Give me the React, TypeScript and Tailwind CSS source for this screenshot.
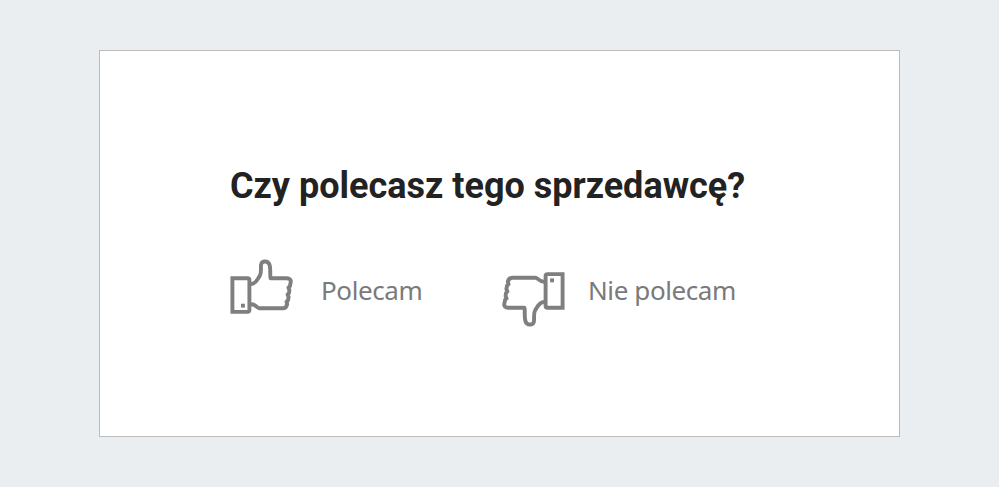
import React from 'react';

function ThumbIcon({ className = '' }: { className?: string }) {
  return (
    <svg
      viewBox="0 0 64 56"
      fill="none"
      stroke="#7f7f7f"
      strokeWidth={3.9}
      strokeLinejoin="round"
      strokeLinecap="round"
      className={`h-14 w-16 shrink-0 ${className}`}
    >
      {/* cuff */}
      <path strokeLinejoin="miter" d="M2.4 19.300H17.500Q19.400 19.300 19.400 21V51.100Q19.400 52.900 17.500 52.900H2.400Z" />
      <rect x="11" y="44.700" width="3.900" height="3.900" fill="#7f7f7f" stroke="none" />
      {/* hand */}
      <path d="M21 25C26 25 27.500 20 29.700 17C32 13.500 30.300 8 31.200 5.100C32.200 1.500 38.100 1.500 39.500 5.700C40.900 10 39.800 14.500 40.500 19.300H56.800C59.700 19.300 61.200 20.800 60.700 23.200L59.900 27.200L58.400 28.600L59.400 31L59 34L57.600 35.500L58.600 38L57.900 41.500L56.500 42.800L57.200 45C56.600 48 55.300 49.300 52.700 49.300H29.500C27.200 49.300 26 45.300 21 45.300" />
    </svg>
  );
}

export default function App() {
  return (
    <main className="h-[487px] w-[999px] overflow-hidden bg-[#eaeef1] pt-[50px] pl-[99px]">
      <section className="h-[387px] w-[801px] border border-[#bbbcbd] bg-white pt-[115px] pl-[130px]">
        <h1 className="h-10 whitespace-nowrap font-['Roboto',sans-serif] text-[36px] leading-10 font-bold text-[#222]">
          Czy polecasz tego sprzedawcę?
        </h1>
        <div className="mt-[53px] flex items-start font-['Noto_Sans',sans-serif] text-[26px] leading-8 tracking-[-0.4px] whitespace-nowrap text-[#7a7a7a]">
          <button className="flex w-[271px] items-start">
            <ThumbIcon />
            <span className="mt-[15px] ml-[27px]">Polecam</span>
          </button>
          <button className="flex items-start">
            <ThumbIcon className="mt-3 rotate-180" />
            <span className="mt-[15px] ml-[23px]">Nie polecam</span>
          </button>
        </div>
      </section>
    </main>
  );
}
